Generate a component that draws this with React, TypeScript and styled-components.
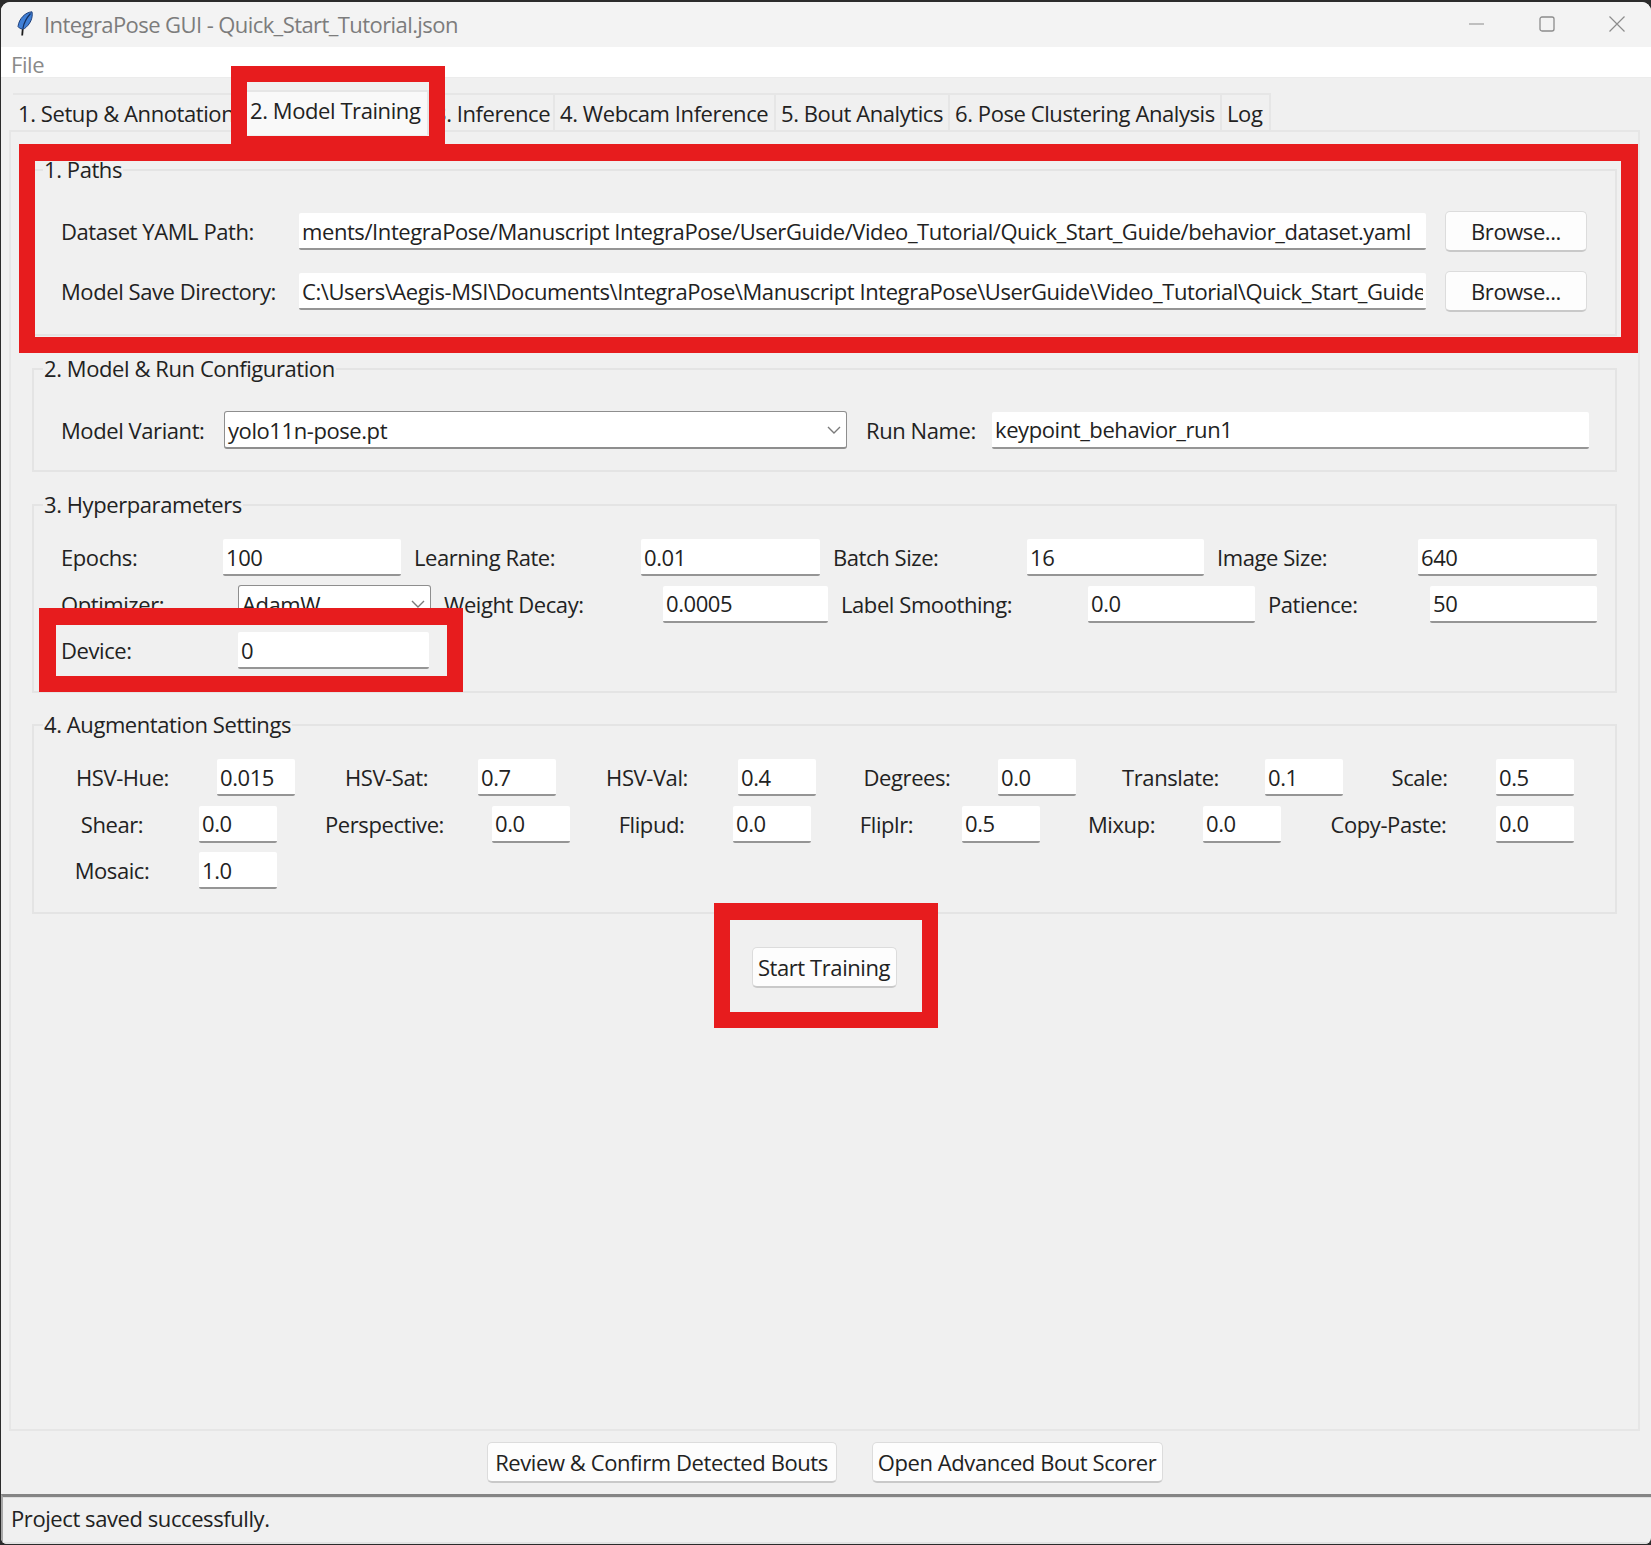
import React from "react"
import styled, { createGlobalStyle } from "styled-components"

const GlobalStyle = createGlobalStyle`
    html, body {
        margin: 0;
        height: 1545px;
        overflow: hidden;
        background: #2b2b2b;
    }
    #root {
        height: 100%;
    }
`

const uiFont = `"Open Sans", "Noto Sans", sans-serif`
const red = "#e71c1e"

const Desktop = styled.div`
    height: 1545px;
    padding: 2px 0 1px 1px;
    box-sizing: border-box;
`

const Window = styled.div`
    position: relative;
    height: 100%;
    display: flex;
    flex-direction: column;
    background: #f0f0f0;
    border-radius: 9px 9px 6px 6px;
    overflow: hidden;
    font-family: ${uiFont};
    font-size: 22px;
    letter-spacing: -0.42px;
    color: #222;
`

const TitleBar = styled.div`
    height: 45px;
    flex: none;
    display: flex;
    align-items: center;
    background: #f3f3f3;
    padding-left: 15px;
    padding-bottom: 2px;
    box-sizing: border-box;
    color: #7c7c7c;
`

const TitleText = styled.span`
    margin-left: 10px;
    letter-spacing: -0.58px;
`

const WindowControls = styled.div`
    margin-left: auto;
    display: flex;
    align-items: center;
    gap: 54px;
    padding-right: 26px;
`

const MenuBar = styled.div`
    height: 31px;
    flex: none;
    display: flex;
    align-items: center;
    background: #fff;
    padding: 3px 0 0 10px;
    color: #8a8a8a;
    border-bottom: 1px solid #ececec;
    box-sizing: border-box;
`

const TabStrip = styled.div`
    flex: none;
    display: flex;
    align-items: flex-end;
    height: 37px;
    margin-top: 15px;
    padding-left: 12px;
`

const Tab = styled.div<{ $width: number; $active?: boolean }>`
    width: ${(p) => p.$width}px;
    box-sizing: border-box;
    flex: none;
    overflow: hidden;
    white-space: nowrap;
    display: flex;
    align-items: center;
    padding-left: ${(p) => (p.$active ? 3 : 5)}px;
    border-right: 2px solid #e6e6e6;
    border-top: 2px solid #e6e6e6;
    height: ${(p) => (p.$active ? 45 : 37)}px;
    margin-bottom: ${(p) => (p.$active ? -5 : 0)}px;
    padding-bottom: ${(p) => (p.$active ? 7 : 0)}px;
    background: ${(p) => (p.$active ? "#f9f9f9" : "#f0f0f0")};
    position: relative;
    z-index: ${(p) => (p.$active ? 1 : 0)};
`

const Pane = styled.div`
    flex: 1;
    margin: 0 11px 0 8px;
    border: 2px solid #e6e6e6;
    padding-top: 23px;
    display: flex;
    flex-direction: column;
    align-items: stretch;
    min-height: 0;
`

const Frame = styled.fieldset<{ $top: number; $bottom: number }>`
    margin: ${(p) => p.$top}px 21px 0 21px;
    min-width: 0;
    padding: 0 0 ${(p) => p.$bottom}px 0;
    border: 2px solid #e4e4e4;
`

const FrameTitle = styled.legend`
    margin-left: 9px;
    padding: 0 1px;
    line-height: 28px;
    height: 30px;
`

const FrameBody = styled.div<{ $top: number; $gap: number }>`
    padding-top: ${(p) => p.$top}px;
    display: flex;
    flex-direction: column;
    gap: ${(p) => p.$gap}px;
`

const FormRow = styled.div<{ $cols: string; $offset: number }>`
    display: grid;
    grid-template-columns: ${(p) => p.$cols};
    align-items: center;
    margin-left: ${(p) => p.$offset}px;
`

const FieldLabel = styled.span<{ $pad?: number; $center?: boolean }>`
    padding-left: ${(p) => p.$pad ?? 0}px;
    padding-bottom: 1px;
    white-space: nowrap;
    justify-self: ${(p) => (p.$center ? "center" : "start")};
`

const Entry = styled.input`
    box-sizing: border-box;
    width: 100%;
    height: 37px;
    padding: 0 3px;
    margin: 0;
    background: #fff;
    border: none;
    border-bottom: 2px solid #959595;
    border-radius: 2px;
    outline: none;
    font: inherit;
    letter-spacing: inherit;
    color: #222;
`

const Combo = styled.div`
    box-sizing: border-box;
    height: 38px;
    display: flex;
    align-items: center;
    justify-content: space-between;
    padding: 0 5px 0 3px;
    background: #fff;
    border: 1px solid #8e8e8e;
    border-bottom-width: 2px;
    border-radius: 3px;
`

const PushButton = styled.button<{ $width: number; $height: number }>`
    box-sizing: border-box;
    width: ${(p) => p.$width}px;
    height: ${(p) => p.$height}px;
    padding: 0;
    background: #fdfdfd;
    border: 1px solid #dcdcdc;
    border-bottom: 2px solid #c9c9c9;
    border-radius: 5px;
    font: inherit;
    letter-spacing: inherit;
    color: #222;
    white-space: nowrap;
`

const StartRow = styled.div`
    display: flex;
    justify-content: center;
    margin-top: 33px;
    padding-right: 1px;
`

const Footer = styled.div`
    flex: none;
    height: 63px;
    display: flex;
    justify-content: center;
    align-items: center;
    gap: 35px;
    padding-right: 3px;
    box-sizing: border-box;
`

const StatusBar = styled.div`
    flex: none;
    height: 50px;
    box-sizing: border-box;
    display: flex;
    align-items: center;
    padding: 0 0 3px 8px;
    border-top: 3px solid #858585;
    border-left: 2px solid #a8a8a8;
    border-bottom: 2px solid #e2e2e2;
    box-shadow: inset 0 1px 0 #dedede;
`

const Highlight = styled.div<{ $x: number; $y: number; $w: number; $h: number; $b?: string }>`
    position: absolute;
    left: ${(p) => p.$x}px;
    top: ${(p) => p.$y}px;
    width: ${(p) => p.$w}px;
    height: ${(p) => p.$h}px;
    box-sizing: border-box;
    border: 16px solid ${red};
    border-width: ${(p) => p.$b ?? "16px"};
    pointer-events: none;
    z-index: 5;
`

type Field = { label: string; value: string; labelW: number; entryW: number; combo?: boolean }
type Row = { offset: number; fields: Field[] }

const f = (label: string, value: string, labelW: number, entryW: number, combo?: boolean): Field => ({
    label,
    value,
    labelW,
    entryW,
    combo,
})

const hyperRows: Row[] = [
    {
        offset: 14,
        fields: [
            f("Epochs:", "100", 175, 178),
            f("Learning Rate:", "0.01", 240, 179),
            f("Batch Size:", "16", 207, 177),
            f("Image Size:", "640", 214, 179),
        ],
    },
    {
        offset: 14,
        fields: [
            f("Optimizer:", "AdamW", 190, 193, true),
            f("Weight Decay:", "0.0005", 232, 165),
            f("Label Smoothing:", "0.0", 260, 167),
            f("Patience:", "50", 175, 167),
        ],
    },
    { offset: 14, fields: [f("Device:", "0", 190, 191)] },
]

const augRows: Row[] = [
    {
        offset: -6,
        fields: [
            f("HSV-Hue:", "0.015", 189, 78),
            f("HSV-Sat:", "0.7", 183, 78),
            f("HSV-Val:", "0.4", 182, 78),
            f("Degrees:", "0.0", 182, 78),
            f("Translate:", "0.1", 189, 78),
            f("Scale:", "0.5", 153, 78),
        ],
    },
    {
        offset: -9,
        fields: [
            f("Shear:", "0.0", 174, 78),
            f("Perspective:", "0.0", 215, 78),
            f("Flipud:", "0.0", 163, 78),
            f("Fliplr:", "0.5", 151, 78),
            f("Mixup:", "0.0", 163, 78),
            f("Copy-Paste:", "0.0", 215, 78),
        ],
    },
    { offset: -9, fields: [f("Mosaic:", "1.0", 174, 78)] },
]

const tabs = [
    { label: "1. Setup & Annotation", width: 234 },
    { label: "2. Model Training", width: 182, active: true },
    { label: "3. Inference", width: 126 },
    { label: "4. Webcam Inference", width: 221 },
    { label: "5. Bout Analytics", width: 174 },
    { label: "6. Pose Clustering Analysis", width: 272 },
    { label: "Log", width: 49 },
]

const colsOf = (row: Row) => row.fields.map((x) => `${x.labelW}px ${x.entryW}px`).join(" ")

const Chevron = () => (
    <svg width="14" height="8" viewBox="0 0 14 8" fill="none">
        <path d="M1 1l6 6 6-6" stroke="#7a7a7a" strokeWidth="1.4" />
    </svg>
)

const FeatherIcon = () => (
    <svg width="18" height="25" viewBox="0 0 18 25">
        <path d="M6.2 24.5L7 15" stroke="#1c1c1c" strokeWidth="1.8" fill="none" />
        <path
            d="M16 0.8C9.5 1.2 3 7.5 2 15.5c1.5 2.3 4 3 6.6 2C14 13.5 17.2 7 16 0.8z"
            fill="#3f7fd6"
            stroke="#1f3f78"
            strokeWidth="1"
        />
        <path d="M14.5 2.5C11 6.5 8 11 7 17" stroke="#14305f" strokeWidth="1.2" fill="none" />
    </svg>
)

const MinimizeIcon = () => (
    <svg width="16" height="16" viewBox="0 0 16 16" fill="none">
        <path d="M0 8h15" stroke="#8c8c8c" strokeWidth="1.2" />
    </svg>
)

const MaximizeIcon = () => (
    <svg width="16" height="16" viewBox="0 0 16 16" fill="none">
        <rect x="1" y="1" width="14" height="14" rx="2" stroke="#8c8c8c" strokeWidth="1.3" />
    </svg>
)

const CloseIcon = () => (
    <svg width="16" height="16" viewBox="0 0 16 16" fill="none">
        <path d="M0.5 0.5l15 15M15.5 0.5l-15 15" stroke="#8c8c8c" strokeWidth="1.2" />
    </svg>
)

function App() {
    const renderRow = (row: Row, center: boolean) => (
        <FormRow key={row.fields[0].label} $cols={colsOf(row)} $offset={row.offset}>
            {row.fields.map((x) => (
                <React.Fragment key={x.label}>
                    <FieldLabel $pad={center ? 0 : 13} $center={center}>{x.label}</FieldLabel>
                    {x.combo ? (
                        <Combo>
                            <span>{x.value}</span>
                            <Chevron />
                        </Combo>
                    ) : (
                        <Entry readOnly value={x.value} />
                    )}
                </React.Fragment>
            ))}
        </FormRow>
    )

    return (
        <Desktop>
            <GlobalStyle />
            <Window>
                <TitleBar>
                    <FeatherIcon />
                    <TitleText>IntegraPose GUI - Quick_Start_Tutorial.json</TitleText>
                    <WindowControls>
                        <MinimizeIcon />
                        <MaximizeIcon />
                        <CloseIcon />
                    </WindowControls>
                </TitleBar>
                <MenuBar>File</MenuBar>
                <TabStrip>
                    {tabs.map((t) => (
                        <Tab key={t.label} $width={t.width} $active={t.active}>
                            {t.label}
                        </Tab>
                    ))}
                </TabStrip>
                <Pane>
                    <Frame $top={0} $bottom={22}>
                        <FrameTitle>1. Paths</FrameTitle>
                        <FrameBody $top={26} $gap={19}>
                            <FormRow $cols="238px 1127px 19px 142px" $offset={27}>
                                <FieldLabel>Dataset YAML Path:</FieldLabel>
                                <Entry readOnly value="ments/IntegraPose/Manuscript IntegraPose/UserGuide/Video_Tutorial/Quick_Start_Guide/behavior_dataset.yaml" />
                                <span />
                                <PushButton $width={142} $height={41}>Browse...</PushButton>
                            </FormRow>
                            <FormRow $cols="238px 1127px 19px 142px" $offset={27}>
                                <FieldLabel>Model Save Directory:</FieldLabel>
                                <Entry readOnly value="C:\Users\Aegis-MSI\Documents\IntegraPose\Manuscript IntegraPose\UserGuide\Video_Tutorial\Quick_Start_Guide\runs" />
                                <span />
                                <PushButton $width={142} $height={41}>Browse...</PushButton>
                            </FormRow>
                        </FrameBody>
                    </Frame>
                    <Frame $top={18} $bottom={21}>
                        <FrameTitle>2. Model &amp; Run Configuration</FrameTitle>
                        <FrameBody $top={27} $gap={0}>
                            <FormRow $cols="163px 623px 145px 597px" $offset={27}>
                                <FieldLabel>Model Variant:</FieldLabel>
                                <Combo>
                                    <span>yolo11n-pose.pt</span>
                                    <Chevron />
                                </Combo>
                                <FieldLabel $pad={19}>Run Name:</FieldLabel>
                                <Entry readOnly value="keypoint_behavior_run1" />
                            </FormRow>
                        </FrameBody>
                    </Frame>
                    <Frame $top={18} $bottom={22}>
                        <FrameTitle>3. Hyperparameters</FrameTitle>
                        <FrameBody $top={19} $gap={9}>
                            {hyperRows.map((row) => renderRow(row, false))}
                        </FrameBody>
                    </Frame>
                    <Frame $top={17} $bottom={23}>
                        <FrameTitle>4. Augmentation Settings</FrameTitle>
                        <FrameBody $top={19} $gap={9.5}>
                            {augRows.map((row) => renderRow(row, true))}
                        </FrameBody>
                    </Frame>
                    <StartRow>
                        <PushButton $width={145} $height={41}>Start Training</PushButton>
                    </StartRow>
                </Pane>
                <Footer>
                    <PushButton $width={350} $height={41}>Review &amp; Confirm Detected Bouts</PushButton>
                    <PushButton $width={291} $height={41}>Open Advanced Bout Scorer</PushButton>
                </Footer>
                <StatusBar>Project saved successfully.</StatusBar>
                <Highlight $x={230} $y={64} $w={214} $h={80} $b="16px 16px 10px 16px" />
                <Highlight $x={18} $y={142} $w={1619} $h={209} $b="17px 17px 16px 16px" />
                <Highlight $x={38} $y={606} $w={424} $h={84} $b="17px 16px 16px 17px" />
                <Highlight $x={713} $y={901} $w={224} $h={125} $b="17px 16px 16px 16px" />
            </Window>
        </Desktop>
    )
}

export default App
